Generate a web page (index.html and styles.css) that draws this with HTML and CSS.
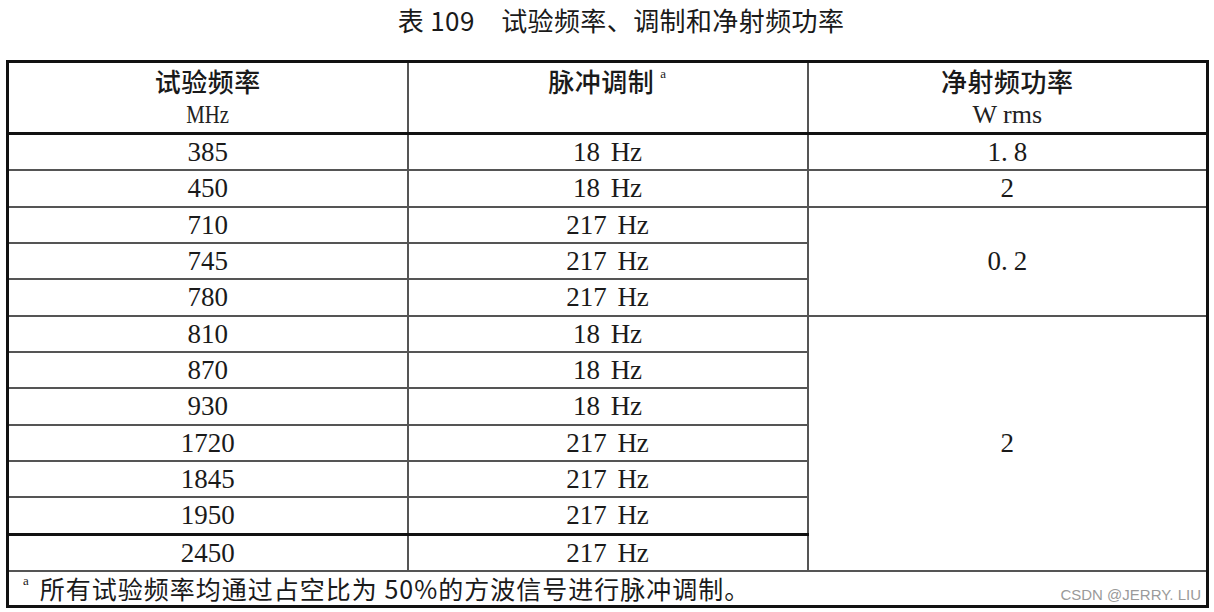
FILE: index.html
```html
<!DOCTYPE html>
<html lang="zh-CN">
<head>
<meta charset="utf-8">
<title>表 109 试验频率、调制和净射频功率</title>
<link rel="stylesheet" href="styles.css">
</head>
<body>
<div class="page">
  <h1 class="title">表 109　试验频率、调制和净射频功率</h1>
  <table class="spec">
    <colgroup><col class="c"><col class="c"><col class="c"></colgroup>
    <thead>
      <tr class="head">
        <th><div class="zh">试验频率</div><div class="unit"><span class="narrow">MHz</span></div></th>
        <th><div class="zh">脉冲调制<sup class="mark">a</sup></div><div class="unit"></div></th>
        <th><div class="zh">净射频功率</div><div class="unit">W rms</div></th>
      </tr>
    </thead>
    <tbody>
      <tr><td>385</td><td>18 Hz</td><td>1<span class="dot">.</span>8</td></tr>
      <tr><td>450</td><td>18 Hz</td><td>2</td></tr>
      <tr><td>710</td><td>217 Hz</td><td rowspan="3">0<span class="dot">.</span>2</td></tr>
      <tr><td>745</td><td>217 Hz</td></tr>
      <tr><td>780</td><td>217 Hz</td></tr>
      <tr class="grp"><td>810</td><td>18 Hz</td><td rowspan="7" class="last">2</td></tr>
      <tr><td>870</td><td>18 Hz</td></tr>
      <tr><td>930</td><td>18 Hz</td></tr>
      <tr><td>1720</td><td>217 Hz</td></tr>
      <tr><td>1845</td><td>217 Hz</td></tr>
      <tr><td>1950</td><td>217 Hz</td></tr>
      <tr class="thick"><td>2450</td><td>217 Hz</td></tr>
      <tr class="foot">
        <td colspan="3"><sup class="fmark">a</sup><span class="note">所有试验频率均通过占空比为 50%的方波信号进行脉冲调制。</span><span class="wm">CSDN @JERRY. LIU</span></td>
      </tr>
    </tbody>
  </table>
</div>
</body>
</html>
```
FILE: styles.css
```css
html, body {
  margin: 0;
  padding: 0;
  background: #ffffff;
}
.page {
  width: 1214px;
  height: 612px;
  overflow: hidden;
  color: #1a1a1a;
}
.title {
  margin: 0;
  padding: 4px 0 0 28px;
  height: 60px;
  box-sizing: border-box;
  text-align: center;
  font-family: "Noto Sans CJK SC", sans-serif;
  font-weight: 400;
  font-size: 26px;
  letter-spacing: 0.4px;
  line-height: 32px;
  color: #1a1a1a;
}
.spec {
  margin-left: 6px;
  width: 1201px;
  table-layout: fixed;
  border-collapse: collapse;
  border: 3px solid #111;
}
.spec col.c { width: 400px; }
.spec th, .spec td {
  border: 2px solid #555;
  padding: 0;
  text-align: center;
}
.head th {
  height: 69px;
  vertical-align: top;
  border-bottom: 3px solid #111;
  font-weight: normal;
}
.zh {
  height: 34px;
  line-height: 34px;
  padding-top: 1px;
  font-family: "Noto Sans CJK SC", sans-serif;
  font-weight: 500;
  font-size: 26px;
  letter-spacing: 0.5px;
  color: #1a1a1a;
}
.mark {
  font-family: "Liberation Serif", serif;
  font-weight: normal;
  font-size: 13px;
  vertical-align: top;
  line-height: 20px;
  margin-left: 6px;
}
.unit {
  height: 34px;
  line-height: 34px;
  font-family: "Liberation Serif", serif;
  font-size: 26px;
  color: #222;
}
.narrow {
  display: inline-block;
  transform: scaleX(0.8);
}
tbody td {
  height: 34.33px;
  vertical-align: middle;
  font-family: "Liberation Serif", serif;
  font-size: 27px;
  line-height: 30px;
  color: #1a1a1a;
  word-spacing: 4px;
}
.dot { margin-right: 6px; }
.thick td { border-top: 3px solid #111; }
.foot td {
  position: relative;
  height: 32px;
  text-align: left;
  padding-left: 14px;
  border-top: 2px solid #555;
}
.fmark {
  font-family: "Liberation Serif", serif;
  font-size: 13px;
  vertical-align: top;
  line-height: 18px;
  margin-right: 11px;
}
.note {
  font-family: "Noto Sans CJK SC", sans-serif;
  font-size: 25px;
  letter-spacing: 1px;
  line-height: 32px;
  color: #1a1a1a;
  word-spacing: 0;
}
.wm {
  position: absolute;
  right: 5px;
  bottom: 1px;
  font-family: "Liberation Sans", sans-serif;
  font-size: 15px;
  line-height: 18px;
  color: #9a9a9a;
  word-spacing: 0;
}
```
